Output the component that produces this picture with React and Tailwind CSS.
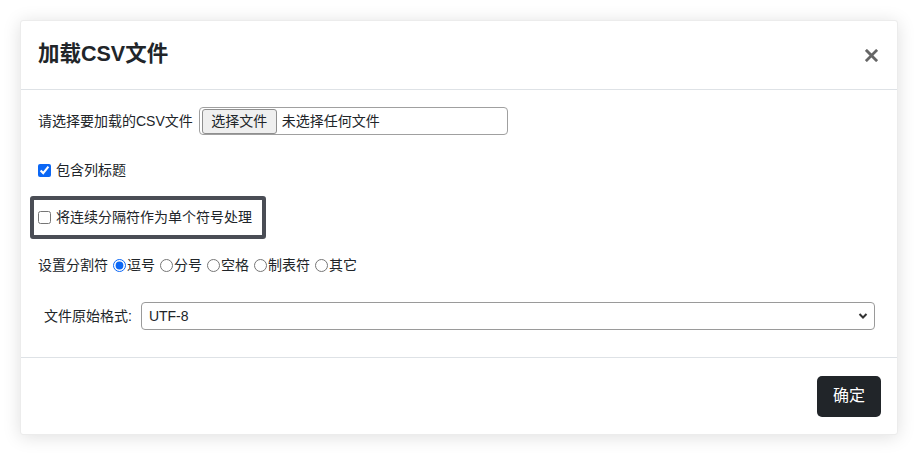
import React, { useState } from 'react';

const font = { fontFamily: '"Liberation Sans", "Noto Sans CJK SC", sans-serif' };

const delimiters = ['逗号', '分号', '空格', '制表符', '其它'];

const App = () => {
  const [hasHeader, setHasHeader] = useState(true);
  const [mergeDelims, setMergeDelims] = useState(false);
  const [delim, setDelim] = useState('逗号');
  const [encoding, setEncoding] = useState('UTF-8');

  return (
    <div className="w-[918px] h-[455px] bg-white p-[20px] text-[#212529]" style={font}>
      <div className="w-[878px] bg-white rounded-[3px] shadow-[0_2px_18px_rgba(0,0,0,0.13)] border border-[#ececec]">
        {/* header */}
        <div className="h-[69px] flex items-center justify-between pl-[17px] pr-[18px] border-b border-[#dee2e6]">
          <h5 className="text-[21.5px] font-bold leading-none">加载CSV文件</h5>
          <button type="button" className="w-[16px] h-[16px] flex items-center justify-center">
            <svg width="13" height="13" viewBox="0 0 14 14">
              <path d="M2 2L12 12M12 2L2 12" stroke="#666" strokeWidth="3" strokeLinecap="square" />
            </svg>
          </button>
        </div>

        {/* body */}
        <div className="pt-[17px] pb-[27px] text-[14px]">
          <div className="h-[28px] flex items-center pl-[17px]">
            <span>请选择要加载的CSV文件</span>
            <div className="ml-[6px] w-[309px] h-[28px] border border-[#a0a0a0] rounded-[4px] flex items-center pl-[2px]">
              <span className="h-[25px] w-[75px] flex items-center justify-center bg-[#efefef] border border-[#8f8f8f] rounded-[3px]">
                选择文件
              </span>
              <span className="ml-[5px]">未选择任何文件</span>
            </div>
          </div>

          <label className="mt-[25px] h-[20px] flex items-center pl-[17px]">
            <input
              type="checkbox"
              checked={hasHeader}
              onChange={() => setHasHeader(!hasHeader)}
              className="w-[13px] h-[13px] accent-[#0b67f5]"
            />
            <span className="ml-[5px]">包含列标题</span>
          </label>

          <div className="ml-[9px] mt-[16px] w-[236px] h-[43px] border-[4px] border-[#4a4d55] rounded-[3px] flex items-center pl-[4px]">
            <label className="flex items-center">
              <input
                type="checkbox"
                checked={mergeDelims}
                onChange={() => setMergeDelims(!mergeDelims)}
                className="w-[13px] h-[13px] accent-[#0b67f5]"
              />
              <span className="ml-[5px]">将连续分隔符作为单个符号处理</span>
            </label>
          </div>

          <div className="mt-[16px] h-[20px] flex items-center pl-[17px]">
            <span className="mr-[5px]">设置分割符</span>
            {delimiters.map((d) => (
              <label key={d} className="flex items-center mr-[5px]">
                <input
                  type="radio"
                  name="delim"
                  checked={delim === d}
                  onChange={() => setDelim(d)}
                  className="w-[13px] h-[13px] mr-[1px] accent-[#0b67f5]"
                />
                <span>{d}</span>
              </label>
            ))}
          </div>

          <div className="mt-[27px] h-[28px] flex items-center pl-[23px] pr-[22px]">
            <span className="mr-[9px]">文件原始格式:</span>
            <div className="relative flex-1">
              <select
                value={encoding}
                onChange={(e) => setEncoding(e.target.value)}
                className="appearance-none w-full h-[28px] border border-[#9a9a9a] rounded-[4px] pl-[7px] text-[14px] bg-white"
                style={font}
              >
                <option>UTF-8</option>
                <option>GBK</option>
                <option>GB2312</option>
              </select>
              <svg className="absolute right-[7px] top-[10px] pointer-events-none" width="10" height="8" viewBox="0 0 10 8">
                <path d="M1.5 2L5 5.5L8.5 2" fill="none" stroke="#333" strokeWidth="2" />
              </svg>
            </div>
          </div>
        </div>

        {/* footer */}
        <div className="border-t border-[#dee2e6] h-[77px] flex items-center justify-end pr-[16px]">
          <button type="button" className="w-[64px] h-[41px] rounded-[5px] bg-[#212529] text-white text-[16px]">
            确定
          </button>
        </div>
      </div>
    </div>
  );
};

export default App;
